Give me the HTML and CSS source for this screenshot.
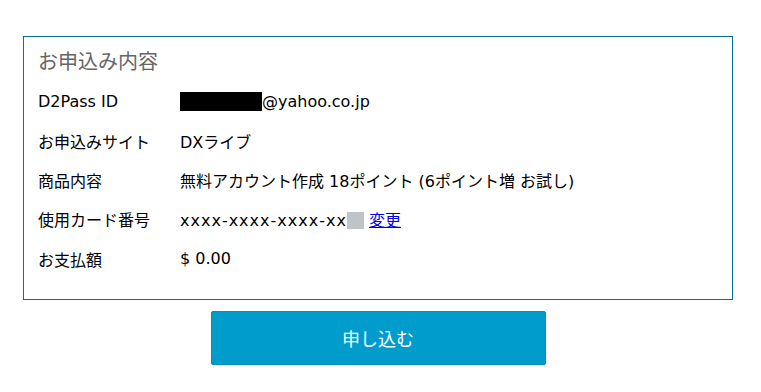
FILE: index.html
```html
<!DOCTYPE html>
<html lang="ja">
<head>
<meta charset="utf-8">
<link rel="stylesheet" href="styles.css">
</head>
<body>
<div class="page">
  <section class="box">
    <h2 class="title">お申込み内容</h2>
    <div class="rows">
      <div class="row"><span class="label">D2Pass ID</span><span class="value"><span class="redact"></span>@yahoo.co.jp</span></div>
      <div class="row"><span class="label">お申込みサイト</span><span class="value">DXライブ</span></div>
      <div class="row"><span class="label">商品内容</span><span class="value">無料アカウント作成 18ポイント (6ポイント増 お試し)</span></div>
      <div class="row"><span class="label">使用カード番号</span><span class="value"><span class="card">xxxx-xxxx-xxxx-xx</span><span class="blur"></span> <a href="#" class="link">変更</a></span></div>
      <div class="row"><span class="label">お支払額</span><span class="value">$ 0.00</span></div>
    </div>
  </section>
  <div class="actions">
    <button class="submit" type="button">申し込む</button>
  </div>
</div>
</body>
</html>
```
FILE: styles.css
```css
html, body {
  margin: 0;
  padding: 0;
  background: #fff;
}
body {
  font-family: "DejaVu Sans", "Noto Sans CJK JP", sans-serif;
  color: #000;
  font-size: 16px;
}
.page {
  padding: 36px 28px 0 23px;
}
.box {
  border: 1px solid #0a6e9e;
  padding: 10px 14px 21px 14px;
}
.title {
  margin: 0 0 7px 0;
  font-size: 20px;
  font-weight: normal;
  line-height: 28px;
  color: #666;
  font-family: "Noto Sans CJK JP", sans-serif;
}
.rows {
  display: flex;
  flex-direction: column;
}
.row {
  display: flex;
  align-items: center;
  height: 39.25px;
}
.label {
  width: 142px;
  flex: none;
}
.value {
  display: block;
  white-space: pre;
}
.card {
  letter-spacing: 1px;
}
.redact {
  display: inline-block;
  width: 82px;
  height: 19px;
  background: #000;
  vertical-align: -4px;
}
.blur {
  display: inline-block;
  width: 17px;
  height: 17px;
  background: #bfc4c9;
  vertical-align: -3px;
}
.link {
  color: #0000ee;
  text-decoration: underline;
}
.actions {
  display: flex;
  justify-content: center;
  padding: 11px 0 0 0;
}
.submit {
  width: 335px;
  height: 54px;
  background: #009ccc;
  border: 1px solid #0a8cba;
  border-radius: 2px;
  color: #fff;
  font-family: "Noto Sans CJK JP", sans-serif;
  font-size: 18px;
  box-shadow: 0 8px 0 -6px #bdbdbd;
  cursor: pointer;
}
```
